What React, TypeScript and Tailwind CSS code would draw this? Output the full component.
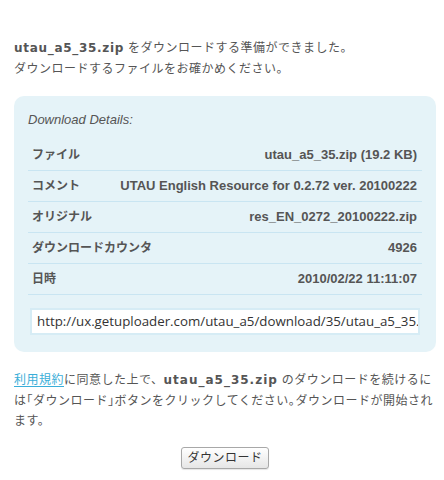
import React from 'react';

const rows = [
  { label: 'ファイル', value: 'utau_a5_35.zip (19.2 KB)' },
  { label: 'コメント', value: 'UTAU English Resource for 0.2.72 ver. 20100222' },
  { label: 'オリジナル', value: 'res_EN_0272_20100222.zip' },
  { label: 'ダウンロードカウンタ', value: '4926' },
  { label: '日時', value: '2010/02/22 11:11:07' },
];

const jp = "font-['Liberation_Sans','Noto_Sans_CJK_JP',sans-serif]";
const mono = "font-['DejaVu_Sans','Noto_Sans_CJK_JP',sans-serif]";
const halt = "[font-feature-settings:'halt']";

const App = () => {
  return (
    <div className={`w-[444px] h-[480px] bg-white pl-[14px] pr-[8px] pt-[38px] text-[#555] ${jp}`}>
      <p className="text-[12px] leading-[21px] tracking-[0.5px]">
        <strong className={`font-bold tracking-[0.7px] ${mono}`}>utau_a5_35.zip</strong>{' '}
        をダウンロードする準備ができました。
        <br />
        ダウンロードするファイルをお確かめください。
      </p>

      <div className="mt-[16px] rounded-[10px] bg-[#e5f3f8] px-[14px] pt-[15px] pb-[17px]">
        <p className="text-[13px] italic leading-[18px] text-[#555]">Download Details:</p>
        <div className="mt-[11px] flex flex-col">
          {rows.map((row) => (
            <div key={row.label} className="flex h-[31px] items-center justify-between border-b border-[#c9e5f2] pl-[4px] pr-[5px]">
              <span className="whitespace-nowrap text-[12px] font-bold">{row.label}</span>
              <span className="whitespace-nowrap text-[13px] font-bold text-[#555]">{row.value}</span>
            </div>
          ))}
        </div>
        <div className="mt-[13px] mx-[2px] h-[27px] border-2 border-[#d6ecf5] bg-white pl-[5px] flex items-center overflow-hidden">
          <span className="whitespace-nowrap text-[13.3px] text-[#333] font-['Open_Sans',sans-serif]">
            http://ux.getuploader.com/utau_a5/download/35/utau_a5_35.zip
          </span>
        </div>
      </div>

      <p className="mt-[18px] whitespace-nowrap text-[12px] leading-[20.5px] tracking-[0.5px]">
        <a href="#" className="text-[#3aaed8] underline underline-offset-2">利用規約</a>に同意した上で、
        <strong className={`font-bold tracking-[1px] ${mono}`}>utau_a5_35.zip</strong>{' '}
        のダウンロードを続けるに
        <br />
        は<span className={halt}>「</span>ダウンロード<span className={halt}>」</span>ボタンをクリックしてください<span className={halt}>。</span>ダウンロードが開始され
        <br />
        ます。
      </p>

      <div className="mt-[15px] flex justify-center">
        <button className="h-[22px] w-[88px] rounded-[3px] border border-[#a8a8a8] bg-gradient-to-b from-white to-[#e6e6e6] text-[12px] tracking-[0.5px] text-[#333] shadow-[0_1px_1px_rgba(0,0,0,0.1)]">
          ダウンロード
        </button>
      </div>
    </div>
  );
};

export default App;
